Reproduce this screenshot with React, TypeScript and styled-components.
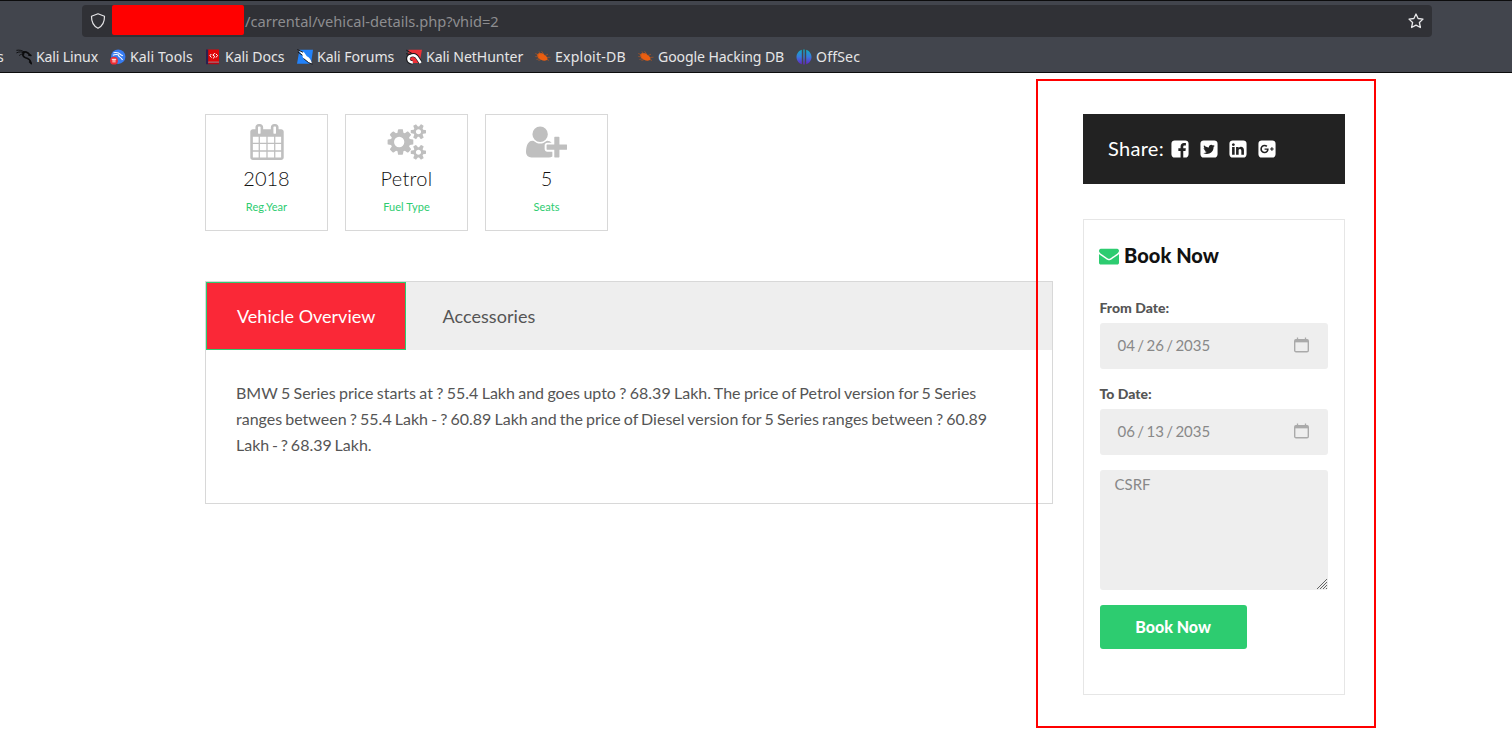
import React from "react";
import styled, { createGlobalStyle } from "styled-components";

const GlobalStyle = createGlobalStyle`
  *, *::before, *::after { box-sizing: border-box; }
  body {
    margin: 0;
    background: #fff;
    overflow: hidden;
    font-family: Lato, "Open Sans", sans-serif;
    color: #555;
  }
`;

const Window = styled.div`
  position: relative;
  width: 1512px;
  height: 748px;
  overflow: hidden;
`;

/* ---------- browser chrome ---------- */

const Chrome = styled.header`
  height: 73px;
  background: #42454d;
  border-top: 1px solid #0c0c0d;
  border-bottom: 1px solid #0c0c0d;
  padding-top: 4px;
  font-family: "Noto Sans", sans-serif;
`;

const AddressBar = styled.div`
  display: flex;
  align-items: center;
  width: 1350px;
  height: 32px;
  margin-left: 82px;
  padding: 0 8px;
  background: #303136;
  border-radius: 4px;
  color: #8d8d90;
`;

const Redaction = styled.span`
  width: 132px;
  height: 30px;
  margin-left: 6px;
  margin-top: -2px;
  background: #f00;
  border-radius: 2px;
`;

const UrlText = styled.span`
  flex: 1;
  margin-left: 1px;
  font-size: 14.67px;
  line-height: 20px;
  white-space: nowrap;
`;

const Bookmarks = styled.nav`
  display: flex;
  align-items: center;
  height: 34px;
  margin-top: 3px;
  color: #e6e6e7;
`;

const Bookmark = styled.span<{ $width: number; $tracking?: number }>`
  display: flex;
  align-items: center;
  flex: none;
  gap: 4px;
  width: ${(p) => p.$width}px;
  font-size: 14.1px;
  letter-spacing: ${(p) => p.$tracking ?? 0}px;
  line-height: 20px;
  white-space: nowrap;

  svg { flex: none; }
`;

const ClippedLabel = styled.span`
  margin-left: -3px;
`;

/* ---------- page ---------- */

const Page = styled.main`
  display: flex;
  gap: 30px;
  padding: 41px 0 0 205px;
`;

const Details = styled.section`
  width: 848px;
`;

const Features = styled.ul`
  display: flex;
  gap: 17px;
  margin: 0 0 50px;
  padding: 0;
  list-style: none;
`;

const Feature = styled.li`
  display: flex;
  flex-direction: column;
  align-items: center;
  width: 123px;
  height: 117px;
  padding-top: 9px;
  border: 1px solid #d8d8d8;
  color: #bfbfbf;
`;

const FeatureValue = styled.h5<{ $tracking?: number }>`
  margin: 5px 0 0;
  font-size: 20px;
  font-weight: 300;
  letter-spacing: ${(p) => p.$tracking ?? 0}px;
  line-height: 26px;
  color: #111;
`;

const FeatureLabel = styled.p`
  margin: 8px 0 0;
  font-size: 11px;
  letter-spacing: 0.08px;
  line-height: 16px;
  color: #2dcc70;
`;

const Panel = styled.div`
  height: 223px;
  border: 1px solid #d8d8d8;
`;

const Tabs = styled.div`
  display: flex;
  height: 68px;
  background: #eee;
`;

const Tab = styled.span<{ $active?: boolean }>`
  display: flex;
  align-items: center;
  padding: ${(p) => (p.$active ? "0 30px" : "0 36.500px")};
  width: ${(p) => (p.$active ? "200px" : "auto")};
  border: ${(p) => (p.$active ? "1px solid #2dcc70" : "none")};
  background: ${(p) => (p.$active ? "#fa2837" : "transparent")};
  color: ${(p) => (p.$active ? "#fff" : "#555")};
  font-size: 18px;
  letter-spacing: ${(p) => (p.$active ? 0 : 0.05)}px;
  white-space: nowrap;
`;

const Overview = styled.p`
  margin: 30px 30px 0;
  font-size: 16px;
  line-height: 26px;
`;

const Line = styled.span<{ $gap: number }>`
  display: block;
  white-space: nowrap;
  word-spacing: ${(p) => p.$gap}px;
`;

const Sidebar = styled.aside`
  width: 262px;
`;

const Share = styled.div`
  display: flex;
  align-items: center;
  height: 70px;
  padding-left: 25px;
  background: #222;
  color: #fff;
  font-size: 20px;
`;

const ShareLabel = styled.span`
  padding-bottom: 2px;
  letter-spacing: 0.3px;
`;

const ShareLinks = styled.span`
  display: flex;
  gap: 9px;
  margin-left: 6px;
`;

const Booking = styled.form`
  height: 476px;
  margin-top: 35px;
  padding: 21px 16px 0;
  border: 1px solid #e6e6e6;
`;

const BookingTitle = styled.h5`
  display: flex;
  align-items: center;
  gap: 5px;
  margin: 0 0 31px -1px;
  font-size: 20px;
  font-weight: 900;
  line-height: 28px;
  letter-spacing: 0.05px;
  color: #111;

  svg { color: #2dcc70; margin-top: 1px; }
`;

const FieldLabel = styled.label`
  display: block;
  height: 23px;
  margin-left: -0.5px;
  font-size: 14px;
  font-weight: 900;
  line-height: 15px;
`;

const DateField = styled.div`
  display: flex;
  align-items: center;
  justify-content: space-between;
  height: 46px;
  margin-bottom: 17px;
  padding: 0 19px 2px 17.500px;
  background: #eee;
  border-radius: 3px;
  color: #888;
  font-size: 15px;
  word-spacing: -1.45px;
`;

const Message = styled.div`
  display: flex;
  justify-content: space-between;
  height: 120px;
  margin-top: -2px;
  padding: 4px 0 0 14.500px;
  background: #eee;
  border-radius: 3px;
  color: #888;
  font-size: 15px;
  line-height: 20px;

  svg { align-self: flex-end; }
`;

const Submit = styled.button`
  display: block;
  width: 147px;
  height: 44px;
  margin: 15px 0 0;
  padding: 0 1px 0 0;
  border: 0;
  border-radius: 3px;
  background: #2dcc70;
  color: #fff;
  font: 900 16px/44px Lato, sans-serif;
`;

const Highlight = styled.div`
  position: absolute;
  left: 1036px;
  top: 79px;
  width: 340px;
  height: 649px;
  border: 2px solid #f00;
  pointer-events: none;
`;

/* ---------- icons ---------- */

const SQUARE =
  "v960q0 119-84.500 203.500t-203.500 84.500h-960q-119 0-203.500-84.500t-84.500-203.500v-960q0-119 84.500-203.500t203.500-84.500h960q119 0 203.500 84.500t84.500 203.500z";

const SMALL_COG =
  "v140q0 16-149 31-12 27-30 52 51 113 51 138 0 4-4 7-122 71-124 71-8 0-46-47t-52-68q-20 2-30 2t-30-2q-14 21-52 68t-46 47q-2 0-124-71-4-3-4-7 0-25 51-138-18-25-30-52-149-15-149-31v-140q0-16 149-31 13-29 30-52-51-113-51-138 0-4 4-7 4-2 35-20t59-34 30-16q8 0 46 46.500t52 67.500q20-2 30-2t30 2q51-71 92-112l6-2q4 0 124 70 4 3 4 7 0 25-51 138 17 23 30 52 149 15 149 31z";

const PATHS = {
  calendar:
    "M192 1664h288v-288h-288v288zm352 0h320v-288h-320v288zm-352-352h288v-320h-288v320zm352 0h320v-320h-320v320zm-352-384h288v-288h-288v288zm736 736h320v-288h-320v288zm-384-736h320v-288h-320v288zm768 736h288v-288h-288v288zm-384-352h320v-320h-320v320zm-352-864v-288q0-13-9.500-22.500t-22.500-9.500h-64q-13 0-22.500 9.500t-9.500 22.500v288q0 13 9.500 22.500t22.500 9.500h64q13 0 22.500-9.500t9.500-22.500zm736 864h288v-320h-288v320zm-384-384h320v-288h-320v288zm384 0h288v-288h-288v288zm32-480v-288q0-13-9.500-22.500t-22.500-9.500h-64q-13 0-22.500 9.500t-9.500 22.500v288q0 13 9.500 22.500t22.500 9.500h64q13 0 22.500-9.500t9.500-22.500zm384-64v1280q0 52-38 90t-90 38h-1408q-52 0-90-38t-38-90v-1280q0-52 38-90t90-38h128v-96q0-66 47-113t113-47h64q66 0 113 47t47 113v96h384v-96q0-66 47-113t113-47h64q66 0 113 47t47 113v96h128q52 0 90 38t38 90z",
  cogs:
    "M832 896q0-106-75-181t-181-75-181 75-75 181 75 181 181 75 181-75 75-181zm832 512q0-52-38-90t-90-38-90 38-38 90q0 53 37.500 90.500t90.500 37.500 90.500-37.500 37.500-90.500zm0-1024q0-52-38-90t-90-38-90 38-38 90q0 53 37.500 90.500t90.500 37.500 90.500-37.500 37.500-90.500zm-384 421v185q0 10-7 19.500t-16 10.500l-155 24q-11 35-32 76 34 48 90 115 7 11 7 20 0 12-7 19-23 30-82.500 89.500t-78.500 59.500q-11 0-21-7l-115-90q-37 19-77 31-11 108-23 155-7 24-30 24h-186q-11 0-20-7.500t-10-17.500l-23-153q-34-10-75-31l-118 89q-7 7-20 7-11 0-21-8-144-133-144-160 0-9 7-19 10-14 41-53t47-61q-23-44-35-82l-152-24q-10-1-17-9.500t-7-19.500v-185q0-10 7-19.500t16-10.500l155-24q11-35 32-76-34-48-90-115-7-11-7-20 0-12 7-20 22-30 82-89t79-59q11 0 21 7l115 90q34-18 77-32 11-108 23-154 7-24 30-24h186q11 0 20 7.500t10 17.500l23 153q34 10 75 31l118-89q8-7 20-7 11 0 21 8 144 133 144 160 0 8-7 19-12 16-42 54t-45 60q23 48 34 82l152 23q10 2 17 10.500t7 19.500z" +
    "M1920 1338" + SMALL_COG + "M1920 314" + SMALL_COG,
  userPlus:
    "M704 896q-159 0-271.500-112.500t-112.500-271.500 112.500-271.500 271.500-112.500 271.500 112.500 112.500 271.500-112.500 271.500-271.500 112.500zm960 128h352q13 0 22.500 9.500t9.500 22.500v192q0 13-9.500 22.500t-22.500 9.500h-352v352q0 13-9.500 22.500t-22.500 9.500h-192q-13 0-22.500-9.500t-9.500-22.500v-352h-352q-13 0-22.500-9.500t-9.500-22.500v-192q0-13 9.500-22.500t22.500-9.500h352v-352q0-13 9.500-22.500t22.500-9.500h192q13 0 22.500 9.500t9.500 22.500v352zm-736 224q0 52 38 90t90 38h256v238q-68 50-171 50h-874q-121 0-194-69t-73-190q0-53 3.500-103.500t14-109 26.500-108.500 43-97.500 62-81 85.500-53.500 111.500-20q19 0 39 17 79 61 154.500 91.500t164.500 30.500 164.500-30.500 154.500-91.500q20-17 39-17 132 0 217 96h-223q-52 0-90 38t-38 90v192z",
  facebook:
    "M1376 128q119 0 203.500 84.500t84.500 203.500v960q0 119-84.500 203.500t-203.500 84.500h-188v-595h199l30-232h-229v-148q0-56 23.500-84t91.500-28l122-1v-207q-63-9-178-9-136 0-217.500 80t-81.500 226v171h-200v232h200v595h-532q-119 0-203.500-84.500t-84.500-203.500v-960q0-119 84.500-203.500t203.500-84.500h960z",
  twitter:
    "M1408 610q-56 25-121 34 68-40 93-117-65 38-134 51-61-66-153-66-87 0-148.500 61.500t-61.500 148.500q0 29 5 48-129-7-242-65t-192-155q-29 50-29 106 0 114 91 175-47-1-100-26v2q0 75 50 133.500t123 72.500q-29 8-51 8-13 0-39-4 21 63 74.500 104t121.500 42q-116 90-261 90-26 0-50-3 148 94 322 94 112 0 210-35.500t168-95 120.500-137 75-162 24.500-168.500q0-18-1-27 63-45 105-109zm256-194" + SQUARE,
  linkedin:
    "M365 1414h231v-694h-231v694zm246-908q-1-52-36-86t-93-34-94.500 34-36.500 86q0 51 35.500 85.500t92.500 34.500h1q59 0 95-34.500t36-85.500zm585 908h231v-398q0-154-73-233t-193-79q-136 0-209 117h2v-101h-231q3 66 0 694h231v-388q0-38 7-56 15-35 45-59.500t74-24.500q116 0 116 157v371zm468-998" + SQUARE,
  googlePlus:
    "M1045 905q0-26-6-64h-362v132h217q-3 24-16.500 50t-37.500 53-66.500 44.500-96.500 17.500q-99 0-169-71t-70-171 70-171 169-71q92 0 153 59l104-101q-108-100-257-100-160 0-272 112.500t-112 271.500 112 271.500 272 112.500q165 0 266.500-105t101.500-270zm345 46h109v-110h-109v-110h-110v110h-110v110h110v110h110v-110zm274-535" + SQUARE,
  envelope:
    "M1792 710v794q0 66-47 113t-113 47h-1472q-66 0-113-47t-47-113v-794q44 49 101 87 362 246 497 345 57 42 92.500 65.500t94.500 48 110 24.500h2q51 0 110-24.500t94.500-48 92.500-65.500q170-123 498-345 57-39 100-87zm0-294q0 79-49 151t-122 123q-376 261-468 325-10 7-42.500 31t-54 38.500-52 32.500-57.500 27-50 9h-2q-23 0-50-9t-57.500-27-52-32.500-54-38.500-42.500-31q-91-64-262-182.500t-205-142.500q-62-42-117-115.500t-55-136.500q0-78 41.500-130t118.500-52h1472q65 0 112.500 47t47.500 113z",
};

type GlyphProps = { name: keyof typeof PATHS; size: number; box?: [number, number] };

const Glyph = ({ name, size, box = [0, 1792] }: GlyphProps) => (
  <svg
    width={(size * box[1]) / 1792}
    height={size}
    viewBox={`${box[0]} 0 ${box[1]} 1792`}
    fill="currentColor"
    fillRule={name === "cogs" ? "evenodd" : "nonzero"}
  >
    <path d={PATHS[name]} />
  </svg>
);

const ShieldIcon = () => (
  <svg width="16" height="16" viewBox="0 0 16 16" fill="none" stroke="#e4e4e6" strokeWidth="1.200" strokeLinejoin="round">
    <path d="M8 .8 14.500 3.300c.1 5.400-1.700 9.700-6.500 12-4.800-2.300-6.600-6.600-6.500-12Z" />
  </svg>
);

const StarIcon = () => (
  <svg width="16" height="16" viewBox="0 0 16 16" fill="none" stroke="#e8e8ea" strokeWidth="1.300" strokeLinejoin="round">
    <path d="m8 1 2.100 4.500 4.900.6-3.600 3.400 1 5L8 12.100l-4.400 2.400 1-5L1 6.100l4.900-.6Z" />
  </svg>
);

const KaliIcon = () => (
  <svg width="16" height="16" viewBox="0 0 16 16" fill="none" stroke="#0b0b0c" strokeLinecap="round" strokeLinejoin="round">
    <path d="M.8 1.300C3.500.8 6 1.300 8.500 3.200M.8 3.700c2.500-1.200 5-1 7.500 0M3.500 6.300C5 5 6.500 4.800 8 5" strokeWidth=".9" />
    <path d="M7 3.600c1.800-1.400 4.800-.4 6.300 1.700l1.500 1.200-2-.6M7.500 4c-1.300 2.200-.2 4 2 4.700 2.300.6 4.300 1.300 4.600 3.300l1.300 2.600-1.700-1.600" strokeWidth="1.700" />
  </svg>
);

const ToolsIcon = () => (
  <svg width="16" height="16" viewBox="0 0 16 16">
    <circle cx="8.200" cy="7.700" r="7.200" fill="#367bf0" />
    <path d="M3.500 3.800c3-.7 5.500 0 7.300 1.900l2 1M2.800 6.200c2.200-.9 4.200-.9 6.200-.2M8.400 5.500c-.6 2.800 2.900 2.100 4.100 5.500" fill="none" stroke="#fff" strokeWidth="1.100" />
    <circle cx="4" cy="11.700" r="3.900" fill="#ed2c33" />
    <path d="M1.800 10.300h4.400M3.100 10.300v3.200M4.900 10.300v3.200" stroke="#fff" strokeWidth=".9" />
  </svg>
);

const DocsIcon = () => (
  <svg width="16" height="16" viewBox="0 0 16 16">
    <path d="M2 .5h12v12.300H2z" fill="#df0508" />
    <path d="M1 .5h2.200v14.700H1z" fill="#29214f" />
    <path d="M3.200 12.800H14v.8H3.200z" fill="#ddd" />
    <path d="M3.200 13.500H14v1.700H3.200z" fill="#b90412" />
    <path d="M6.300 5 4.800 6.800l1.800 1.700M10.800 4.800l1.700 1.700-1.500 2M9.800 4.300 7.800 6l1.800 1.200-1.200 2.300" fill="none" stroke="#fff" strokeWidth="1" />
  </svg>
);

const ForumsIcon = () => (
  <svg width="16" height="16" viewBox="0 0 16 16">
    <path d="M2.500.8H16L14 14.800H0Z" fill="#2282fa" />
    <path d="m1.500 1 5.700 2.500L9.800 7.200c2.600.8 4 3.200 5.300 7.600l-3.600-1.300-5.200-4.300-1.200-3Z" fill="#fff" />
    <path d="M.3.500 6 3.300M.8 3l4.700 3.300M6.500 9.500l5.200 4.200 3.800 1.500" fill="none" stroke="#17181b" strokeWidth="1" />
  </svg>
);

const NetHunterIcon = () => (
  <svg width="16" height="16" viewBox="0 0 16 16">
    <path d="M2.500.8H16L13.500 14H2Z" fill="#ed3037" />
    <path d="M6.500 13.500C1.500 13.300.5 8 4.700 6.500 9 5 11.200 7.700 12.300 10l2.400 4" fill="none" stroke="#17181b" strokeWidth="4" />
    <path d="M6.800 13.400C1.800 13.200 1 8 5 6.600 9 5.200 11 7.800 12 10l2.700 4" fill="none" stroke="#fff" strokeWidth="2.500" />
    <path d="M.3 1.200 6 4.500M0 4.700l4.500 .8" fill="none" stroke="#17181b" strokeWidth="1" />
  </svg>
);

const ExploitIcon = () => (
  <svg width="16" height="16" viewBox="0 0 16 16">
    <path d="M2.300 5.200C4.800 3.300 8 4 9.800 6.200c1.900 1 2.900 2.600 2.700 4.300-1 1.500-4.200 1.500-6.500.2C3.500 10 2 7.700 2.300 5.200Z" fill="#ec5e10" />
    <path d="M.3 4.500 4 6M4 2.500l2 3M6.500 2.200l2.300 3M.3 7.500 4 8M1.500 10.500 5 9.500M3.500 11.500l2.500-1M10 6.500l3-1.300M12 8.500l3.500-.3M12 10.500l2 1" stroke="#b5561f" strokeWidth=".7" />
  </svg>
);

const OffSecIcon = () => (
  <svg width="16" height="16" viewBox="0 0 16 16">
    <defs>
      <linearGradient id="offsec" x1="0" x2="0" y1="0" y2="1">
        <stop offset="0" stopColor="#10aebf" />
        <stop offset=".5" stopColor="#3978de" />
        <stop offset="1" stopColor="#6720c3" />
      </linearGradient>
    </defs>
    <path d="M5.800.8v14.400C2.800 14.200.5 11.500.5 8s2.300-6.200 5.300-7.200ZM7.300.4h1.400v15.200H7.300ZM10.200.8c3 1 5.300 3.700 5.300 7.200s-2.300 6.200-5.300 7.200Z" fill="url(#offsec)" />
  </svg>
);

const PickerIcon = () => (
  <svg width="15" height="16" viewBox="0 0 15 16" fill="none" stroke="#aaa">
    <path d="M3.500.5v2M11.500.5v2" strokeWidth="1.300" />
    <rect x=".7" y="2.700" width="13.600" height="12" rx="1.300" strokeWidth="1.400" />
    <path d="M1 4h13" strokeWidth="2.700" />
  </svg>
);

const ResizeGrip = () => (
  <svg width="12" height="12" viewBox="0 0 12 12" stroke="#555" strokeWidth=".9">
    <path d="M1 11 11 1M4 11l7-7M7 11l4-4M10 11l1-1" />
  </svg>
);

const BOOKMARKS = [
  { label: "Kali Linux", width: 94, tracking: -0.15, Icon: KaliIcon },
  { label: "Kali Tools", width: 95, tracking: 0.1, Icon: ToolsIcon },
  { label: "Kali Docs", width: 92, tracking: -0.05, Icon: DocsIcon },
  { label: "Kali Forums", width: 109, tracking: -0.05, Icon: ForumsIcon },
  { label: "Kali NetHunter", width: 129, tracking: -0.06, Icon: NetHunterIcon },
  { label: "Exploit-DB", width: 103, tracking: 0.2, Icon: ExploitIcon },
  { label: "Google Hacking DB", width: 158, tracking: -0.11, Icon: ExploitIcon },
  { label: "OffSec", width: 80, tracking: 0.15, Icon: OffSecIcon },
];

export default function App() {
  return (
    <Window>
      <GlobalStyle />
      <Chrome>
        <AddressBar>
          <ShieldIcon />
          <Redaction />
          <UrlText>/carrental/vehical-details.php?vhid=2</UrlText>
          <StarIcon />
        </AddressBar>
        <Bookmarks>
          <Bookmark $width={16}>
            <ClippedLabel>s</ClippedLabel>
          </Bookmark>
          {BOOKMARKS.map(({ label, width, tracking, Icon }) => (
            <Bookmark key={label} $width={width} $tracking={tracking}>
              <Icon />
              {label}
            </Bookmark>
          ))}
        </Bookmarks>
      </Chrome>
      <Page>
        <Details>
          <Features>
            <Feature>
              <Glyph name="calendar" size={36} />
              <FeatureValue>2018</FeatureValue>
              <FeatureLabel>Reg.Year</FeatureLabel>
            </Feature>
            <Feature>
              <Glyph name="cogs" size={36} box={[-30, 1920]} />
              <FeatureValue $tracking={0.3}>Petrol</FeatureValue>
              <FeatureLabel>Fuel Type</FeatureLabel>
            </Feature>
            <Feature>
              <Glyph name="userPlus" size={36} box={[0, 2048]} />
              <FeatureValue>5</FeatureValue>
              <FeatureLabel>Seats</FeatureLabel>
            </Feature>
          </Features>
          <Panel>
            <Tabs>
              <Tab $active>Vehicle Overview</Tab>
              <Tab>Accessories</Tab>
            </Tabs>
            <Overview>
              <Line $gap={-0.76}>
                BMW 5 Series price starts at ? 55.4 Lakh and goes upto ? 68.39 Lakh. The price of Petrol version for 5
                Series
              </Line>
              <Line $gap={-0.97}>
                ranges between ? 55.4 Lakh - ? 60.89 Lakh and the price of Diesel version for 5 Series ranges between ?
                60.89
              </Line>
              <Line $gap={-1.25}>Lakh - ? 68.39 Lakh.</Line>
            </Overview>
          </Panel>
        </Details>
        <Sidebar>
          <Share>
            <ShareLabel>Share:</ShareLabel>
            <ShareLinks>
              <Glyph name="facebook" size={20} />
              <Glyph name="twitter" size={20} />
              <Glyph name="linkedin" size={20} />
              <Glyph name="googlePlus" size={20} />
            </ShareLinks>
          </Share>
          <Booking>
            <BookingTitle>
              <Glyph name="envelope" size={20} />
              Book Now
            </BookingTitle>
            <FieldLabel>From Date:</FieldLabel>
            <DateField>
              04 / 26 / 2035
              <PickerIcon />
            </DateField>
            <FieldLabel>To Date:</FieldLabel>
            <DateField>
              06 / 13 / 2035
              <PickerIcon />
            </DateField>
            <Message>
              CSRF
              <ResizeGrip />
            </Message>
            <Submit type="button">Book Now</Submit>
          </Booking>
        </Sidebar>
      </Page>
      <Highlight />
    </Window>
  );
}
